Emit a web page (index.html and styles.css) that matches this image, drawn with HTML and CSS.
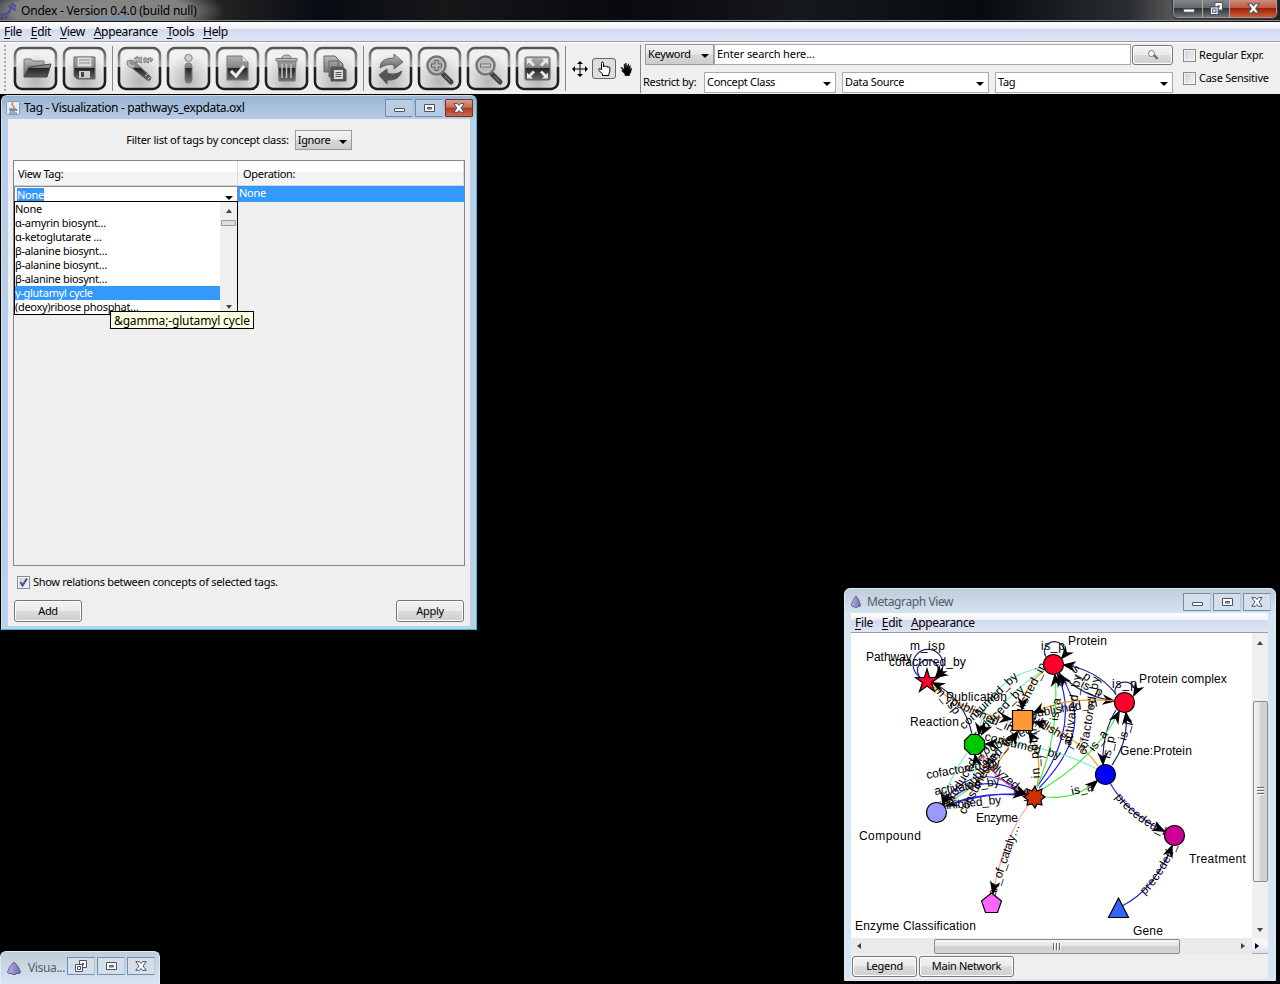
FILE: index.html
```html
<!DOCTYPE html>
<html lang="en">
<head>
<meta charset="utf-8">
<title>Ondex</title>
<link rel="stylesheet" href="styles.css">
</head>
<body>
<svg class="defs" width="0" height="0" aria-hidden="true">
  <defs>
    <linearGradient id="frame" x1="0" y1="0" x2="0" y2="1"><stop offset="0" stop-color="#555"/><stop offset=".45" stop-color="#aaa"/><stop offset=".46" stop-color="#222"/><stop offset="1" stop-color="#1d1d1d"/></linearGradient>
    <radialGradient id="shade" cx=".5" cy=".8" r=".65"><stop offset="0" stop-color="#b5b5b5"/><stop offset="1" stop-color="#f1f1f1"/></radialGradient>
    <linearGradient id="ink" gradientUnits="userSpaceOnUse" x1="0" y1="8" x2="0" y2="36"><stop offset="0" stop-color="#bbb"/><stop offset=".48" stop-color="#858585"/><stop offset=".5" stop-color="#222"/><stop offset="1" stop-color="#777"/></linearGradient>
    <linearGradient id="stone" x1="0" y1="0" x2="0" y2="1"><stop offset="0" stop-color="#bbb"/><stop offset="1" stop-color="#606060"/></linearGradient>
    <linearGradient id="purple" x1="0" y1="0" x2="1" y2="0"><stop offset="0" stop-color="#b9b5e6"/><stop offset="1" stop-color="#6f69ad"/></linearGradient>
    <symbol id="plate" viewBox="0 0 45 45"><rect x="2" y="2" width="41" height="41" rx="7" fill="url(#shade)" stroke="url(#frame)" stroke-width="2.6"/></symbol>
    <symbol id="min" viewBox="0 0 12 10"><rect x="1.5" y="5.5" width="10" height="3" rx=".5" fill="#fff" stroke="#4b5266"/></symbol>
    <symbol id="max" viewBox="0 0 12 10"><path d="M1.5 1.5h10v7h-10zM4.5 4.5h4v1.500h-4z" fill="#fff" fill-rule="evenodd" stroke="#4b5266"/></symbol>
    <symbol id="close" viewBox="0 0 12 10"><path d="M.8.6h3.600L6 2.500 7.600.6h3.600L8 5l3.200 4.300H7.600L6 7.400 4.400 9.300H.8L4 5z" fill="#fff" stroke="#4b5266"/></symbol>
    <symbol id="restore" viewBox="0 0 12 12"><path d="M4.500.5h7v7h-7z" fill="#fff" stroke="#4b5266"/><path d="M7 3h2v2H7z" fill="#4b5266"/><path d="M.5 4.500h7v7h-7z" fill="#fff" stroke="#4b5266"/><path d="M2.500 6.500h3v3h-3z" fill="none" stroke="#4b5266"/></symbol>
    <symbol id="ondex" viewBox="0 0 14 14"><path d="M7 1 11 5.500 13.500 11 12.500 12.500H9L8.500 13.500H5.500L5 12.500H1.500L.5 11 3 5.500z" fill="url(#purple)" stroke="#4a4780" stroke-width=".8"/></symbol>
    <marker id="arrow" viewBox="0 0 13 10" refX="11" refY="5" markerWidth="14" markerHeight="12" markerUnits="userSpaceOnUse" orient="auto"><path d="M0 0 13 5 0 10 4 5z"/></marker>
    <path id="gptText" d="M1110 783Q1128 814 1164 831L1196 846"/>
    <path id="gtText" d="M1122 906Q1154 890 1172 846L1184 815"/>
  </defs>
</svg>

<div class="app">
  <header class="app-title">
    <svg class="app-icon" width="16" height="16" viewBox="0 0 16 16" fill="#4644a0"><circle cx="2" cy="12" r="1.300"/><circle cx="2" cy="15" r="1.200"/><circle cx="5" cy="11.500" r="1.300"/><circle cx="6" cy="14" r="1.500"/><circle cx="7.500" cy="10.500" r="1.200"/><circle cx="9" cy="8.500" r="1.200"/><circle cx="10.500" cy="6.500" r="1.200"/><circle cx="10" cy="3.500" r="1.300"/><circle cx="12.500" cy="5" r="1.300"/><circle cx="12.500" cy="1.500" r="1.200"/><circle cx="15" cy="3" r="1.200"/><circle cx="14.500" cy="6.500" r="1.200"/></svg>
    <span class="app-name">Ondex - Version 0.4.0 (build null)</span>
    <div class="app-controls">
      <span class="ctl ctl-min"><svg width="13" height="11"><use href="#min"/></svg></span>
      <span class="ctl ctl-res"><svg width="13" height="13"><use href="#restore"/></svg></span>
      <span class="ctl ctl-close"><svg width="13" height="11"><use href="#close"/></svg></span>
    </div>
  </header>
  <nav class="menubar main-menu"><span><u>F</u>ile</span><span><u>E</u>dit</span><span><u>V</u>iew</span><span><u>A</u>ppearance</span><span><u>T</u>ools</span><span><u>H</u>elp</span></nav>

  <div class="toolbar">
    <i class="grip"></i>
    <div class="tools">
      <svg width="45" height="45"><use href="#plate"/><path d="M11 31V14q0-1 1-1h6l2 2h11v4" fill="url(#stone)" stroke="#777"/><path d="M11 31 16 21 38 18 34 31z" fill="url(#ink)" stroke="#444"/></svg>
      <svg width="45" height="45"><use href="#plate"/><path d="M12 11h21v22H15l-3-3z" fill="url(#ink)" stroke="#666"/><path d="M15 11h15v10H15z" fill="#ddd" stroke="#888"/><path d="M17 14h11M17 17h11" stroke="#888"/><path d="M17 25h11v7H17z" fill="#ccc"/><path d="M19 26h3v5h-3z" fill="#444"/></svg>
      <i class="rule"></i>
      <svg width="45" height="45"><use href="#plate"/><path d="M10 18 31 35q3 0 3-4L17 15q-3-2-7 3z" fill="url(#ink)" stroke="#777"/><path d="m10 15 4-1-1 3 3 2 2-2q1 5-3 5-5 0-5-7z" fill="#bbb" stroke="#777" stroke-width=".8"/><path d="M28 30l3-2M31 33l2-2" stroke="#ccc"/><path d="m20 10 2 2 3-1-1 3 1 3-3-1-3 1v-3l-2-2 3-.5zM28 11l1 2 3-1-1 3 1 2-3-1-2 1v-2l-1-2h2zM33 11l1 2h2l-1 2-2 1z" fill="#aaa" stroke="#777" stroke-width=".8"/></svg>
      <svg width="45" height="45"><use href="#plate"/><circle cx="22.500" cy="12" r="3.700" fill="#ccc" stroke="#888"/><rect x="19" y="17" width="7" height="20" rx="3.500" fill="url(#ink)" stroke="#777"/></svg>
      <svg width="45" height="45"><use href="#plate"/><path d="M12 10h15l6 6v18H12z" fill="url(#ink)" stroke="#777"/><path d="M27 10v6h6" fill="#ddd" stroke="#888"/><path d="m16 25 5 5 8-10" fill="none" stroke="#eee" stroke-width="3"/></svg>
      <svg width="45" height="45"><use href="#plate"/><path d="M14 15h18l-1 20H15z" fill="url(#ink)" stroke="#777"/><path d="M18 18v14M22.500 18v14M27 18v14" stroke="#c4c4c4" stroke-width="1.500"/><path d="M12 12.500h21v2.500H12zM18 12q0-3 4.500-3t4.500 3" fill="#bbb" stroke="#777"/></svg>
      <svg width="45" height="45"><use href="#plate"/><path d="M11 10h11l3 3v13H11zM16 15h11l3 3v13H16z" fill="url(#stone)" stroke="#666"/><path d="M18 21h12l3 3v11H18z" fill="#555" stroke="#555"/><path d="M21 24h9v9h-9z" fill="#ddd"/><path d="M22.500 26.500h6M22.500 28.500h6M22.500 30.500h6" stroke="#555"/></svg>
      <i class="rule"></i>
      <svg width="45" height="45"><use href="#plate"/><path d="M12 22Q12 12 26 12V8l9 8-9 7v-4Q19 17 12 22z" fill="url(#stone)" stroke="#666"/><path d="M34 25Q31 35 19 34v4l-8-9 8-6v4Q27 30 34 25z" fill="#555" stroke="#555"/></svg>
      <svg width="45" height="45"><use href="#plate"/><path d="m25 27 9 9" stroke="#444" stroke-width="5" stroke-linecap="round"/><path d="m28 30 5 5" stroke="#888"/><circle cx="19.500" cy="19.500" r="9" fill="#aaa" stroke="#777" stroke-width="2.500"/><circle cx="19.500" cy="19.500" r="7" fill="none" stroke="#ccc"/><path d="M19.500 14v11M14 19.500h11" stroke="#666" stroke-width="4"/><path d="M19.500 15v9M15 19.500h9" stroke="#bbb" stroke-width="2"/></svg>
      <svg width="45" height="45"><use href="#plate"/><path d="m25 27 9 9" stroke="#444" stroke-width="5" stroke-linecap="round"/><path d="m28 30 5 5" stroke="#888"/><circle cx="19.500" cy="19.500" r="9" fill="#bbb" stroke="#777" stroke-width="2.500"/><circle cx="19.500" cy="19.500" r="7" fill="none" stroke="#ccc"/><path d="M14 19.500h11" stroke="#777" stroke-width="4"/><path d="M15 19.500h9" stroke="#ccc" stroke-width="2"/></svg>
      <svg width="45" height="45"><use href="#plate"/><rect x="10" y="11" width="25" height="23" rx="1.500" fill="url(#ink)" stroke="#666"/><path d="M12 12.500h6l-2 2 4 4-2 2-4-4-2 2zM33 12.500h-6l2 2-4 4 2 2 4-4 2 2zM12 32.500h6l-2-2 4-4-2-2-4 4-2-2zM33 32.500h-6l2-2-4-4 2-2 4 4 2-2z" fill="#e8e8e8"/></svg>
      <i class="rule"></i>
    </div>
    <div class="modes">
      <svg width="16" height="16" viewBox="0 0 16 16"><path d="M8 1v14M1 8h14" stroke="#000"/><path d="m8 0 3 3H5zM8 16l3-3H5zM0 8l3-3v6zM16 8l-3-3v6z"/></svg>
      <span class="mode-on"><svg width="14" height="16" viewBox="0 0 14 16"><path d="M4.500 8.500V2.500q0-1.500 1-1.500t1 1.500V6q0-1 1-1t1.200 1q.3-.7 1-.7 1 0 1.100 1.200.4-.7 1-.7 1 0 1 1.500v3.500l-1 2v1.700H5.500v-1.700L2 9.500q-.8-1.500.3-2 1-.2 2.200 1.500z" fill="#fff" stroke="#000"/></svg></span>
      <svg width="12" height="14" viewBox="0 0 14 16"><path d="M4 10 1 6l2 1 2 2V2l1 5 1-6 1 6 2-5v5l2-3-.5 5 2-2-1 5-1.500 2v2H6v-2L2 10z" stroke="#000" stroke-width=".8"/></svg>
    </div>
    <div class="search">
      <div class="search-row">
        <span class="combo flat keyword">Keyword<i class="tri"></i></span><span class="field query">Enter search here...</span><span class="button go"><svg width="12" height="12" viewBox="0 0 12 12"><circle cx="4.500" cy="4.500" r="3" fill="#fff" stroke="#777"/><path d="m7 6 3.500 4" stroke="#666" stroke-width="2"/></svg></span>
        <span class="option"><i class="box"></i><b>Regular Expr.</b></span>
      </div>
      <div class="search-row second">
        <span class="restrict">Restrict by:</span><span class="combo cls">Concept Class<i class="tri"></i></span><span class="combo src">Data Source<i class="tri"></i></span><span class="combo tagc">Tag<i class="tri"></i></span>
        <span class="option"><i class="box"></i><b class="cs">Case Sensitive</b></span>
      </div>
    </div>
  </div>

  <main class="desktop">
    <section class="win tag-win">
      <div class="win-title">
        <svg width="14" height="14" viewBox="0 0 14 14"><rect x=".5" y=".5" width="13" height="13" rx="1" fill="#e6edf2" stroke="#8b9aa6"/><path d="M7 1.500q-2 2 0 3t0 3" fill="none" stroke="#e07a1f" stroke-width="1.300"/><path d="M3 8h7v1H4v1h5M3 12h8M10 8.500q2 0 0 1.500" fill="none" stroke="#4f6f8e"/></svg>
        <span class="tag-title">Tag - Visualization - pathways_expdata.oxl</span>
        <div class="win-controls"><i><svg width="12" height="10"><use href="#min"/></svg></i><i><svg width="12" height="10"><use href="#max"/></svg></i><i class="red"><svg width="12" height="10"><use href="#close"/></svg></i></div>
      </div>
      <div class="tag-body">
        <div class="filter"><span class="filter-text">Filter list of tags by concept class:</span><span class="combo flat ignore">Ignore<i class="tri"></i></span></div>
        <div class="table">
          <div class="thead"><span>View Tag:</span><span>Operation:</span></div>
          <div class="trow"><span class="edit"><em>None</em><i class="tri"></i></span><span class="picked">None</span></div>
          <div class="popup">
            <ul><li>None</li><li>α-amyrin biosynt…</li><li>α-ketoglutarate …</li><li>β-alanine biosynt…</li><li>β-alanine biosynt…</li><li>β-alanine biosynt…</li><li class="hot">γ-glutamyl cycle</li><li>(deoxy)ribose phosphat…</li></ul>
            <div class="popup-bar"><i class="up"></i><i class="mini"></i><i class="down"></i></div>
          </div>
          <div class="tooltip">&amp;gamma;-glutamyl cycle</div>
        </div>
        <div class="show"><i class="box"><svg width="11" height="11" viewBox="0 0 11 11"><path d="m2.500 5 2 3.500L9 1.500" fill="none" stroke="#3f568f" stroke-width="2"/></svg></i><span>Show relations between concepts of selected tags.</span></div>
        <div class="actions"><span class="button">Add</span><span class="button">Apply</span></div>
      </div>
    </section>

    <section class="win meta-win">
      <div class="win-title">
        <svg width="10" height="13" viewBox="0 0 14 14" preserveAspectRatio="none"><use href="#ondex" width="14" height="14"/></svg>
        <span class="meta-title">Metagraph View</span>
        <div class="win-controls"><i><svg width="12" height="10"><use href="#min"/></svg></i><i><svg width="12" height="10"><use href="#max"/></svg></i><i><svg width="12" height="10"><use href="#close"/></svg></i></div>
      </div>
      <div class="meta-body">
        <nav class="menubar"><span><u>F</u>ile</span><span><u>E</u>dit</span><span><u>A</u>ppearance</span></nav>
        <div class="view">
          <svg class="graph" width="401" height="305" viewBox="851 633 401 305">
            <g fill="none" stroke-width="1.200" marker-end="url(#arrow)">
              <g stroke="#23237a">
                <path d="M920 677A15 15 0 1 1 936 677"/>
                <path d="M1046 657A10 10 0 1 1 1062 658"/><path d="M1116 695A10 9 0 1 1 1134 695"/>
                <path d="M972 734Q964 698 933 683"/>
                <path d="M1059 673Q1083 697 1114 701"/><path d="M1116 694Q1096 669 1064 665"/>
                <path d="M1116 710Q1102 733 1103 764"/><path d="M1112 765Q1129 741 1126 713"/>
              </g>
              <g stroke="#2222e8">
                <path d="M922 679A10.500 10.500 0 1 1 936 677"/>
                <path d="M1025 794Q978 755 943 803"/><path d="M1025 795Q982 768 944 805"/><path d="M1025 796Q982 790 946 806"/>
                <path d="M946 806Q985 792 1024 794"/>
                <path d="M1037 787Q1080 727 1058 675"/><path d="M1039 788Q1098 728 1060 675"/>
                <path d="M1110 783Q1128 814 1164 831"/><path d="M1122 906Q1154 890 1172 846"/>
              </g>
              <g stroke="#ff9518">
                <path d="M934 687Q968 714 1011 719"/><path d="M1044 671Q1024 685 1022 709"/><path d="M1115 701Q1066 696 1034 713"/><path d="M1098 766Q1076 734 1035 722"/><path d="M1037 787Q1043 755 1029 732"/><path d="M985 744Q1008 744 1018 732"/><path d="M945 803Q995 779 1016 733"/>
              </g>
              <g stroke="#7bf0ca">
                <path d="M1044 667Q985 678 979 734"/><path d="M1044 670Q1006 693 982 734"/><path d="M1097 769Q1045 742 986 744"/><path d="M967 753Q948 780 943 803"/><path d="M945 805Q981 787 975 755"/>
              </g>
              <g stroke="#46ee46"><path d="M1037 787Q1060 733 1055 675"/><path d="M1041 790Q1096 757 1119 712"/><path d="M1045 797Q1075 800 1097 781"/></g>
              <path stroke="#f23bb5" d="M980 753Q996 782 1026 794"/><path stroke="#ffa8a8" d="M1029 804Q1003 839 993 893"/>
            </g>
            <g class="edge-text">
              <text x="910" y="650" textLength="35">m_isp</text><text x="889" y="666" textLength="77">cofactored_by</text><text x="1041" y="650" textLength="24">is_p</text><text x="1112" y="688" textLength="25">is_p</text>
              <text transform="translate(934 690) rotate(50)">m_isp</text>
              <text transform="translate(950 704) rotate(25)" textLength="68">published_in</text>
              <text transform="translate(964 730) rotate(-44)" textLength="76">consumed_by</text>
              <text transform="translate(973 744) rotate(-46)" textLength="75">produced_by</text>
              <text transform="translate(1014 729) rotate(-63)" textLength="72">published_in</text>
              <text transform="translate(1031 718) rotate(-10)" textLength="68">published_in</text>
              <text transform="translate(1026 718) rotate(31)" textLength="67">published_in</text>
              <text transform="translate(1040 778) rotate(-94)" textLength="65">in_publish</text>
              <text transform="translate(984 740) rotate(14)" textLength="78">consumed_by</text>
              <text transform="translate(927 779) rotate(-10)" textLength="75">cofactored_by</text>
              <text transform="translate(935 795) rotate(-9)" textLength="66">activated_by</text>
              <text transform="translate(940 810) rotate(-6)" textLength="62">inhibited_by</text>
              <text transform="translate(965 815) rotate(-61)" textLength="72">consumed_by</text>
              <text transform="translate(951 806) rotate(-60)" textLength="72">produced_by</text>
              <text transform="translate(970 790) rotate(-49)" textLength="66">published_in</text>
              <text transform="translate(977 758) rotate(40)" textLength="69">catalyzed_by</text>
              <text transform="translate(985 755) rotate(-26)">published_in</text>
              <text transform="translate(1058 721) rotate(-83)">is_a</text>
              <text transform="translate(1071 746) rotate(-82)" textLength="72">activated_by</text>
              <text transform="translate(1086 755) rotate(-80)" textLength="79">cofactored_by</text>
              <text transform="translate(1094 752) rotate(-51)">is_a</text>
              <text transform="translate(1072 795) rotate(-12)">is_a</text>
              <text transform="translate(1069 669) rotate(34)">is_p</text><text transform="translate(1080 687) rotate(25)">is_p</text>
              <text transform="translate(1110 759) rotate(-78)">is_p</text><text transform="translate(1126 741) rotate(-75)">is_p</text>
              <text dy="4"><textPath href="#gptText" startOffset="14">preceded_by</textPath></text>
              <text dy="4"><textPath href="#gtText" startOffset="24">preceded_by</textPath></text>
              <text transform="translate(993 903) rotate(-71)" textLength="82">part_of_cataly…</text>
            </g>
            <g stroke="#000" stroke-width="1.200">
              <path d="m927 669 2.500 8.500h9l-7 5 3 9-7.500-5.500-7.500 5.500 3-9-7-5h9z" fill="#ff002c"/>
              <circle cx="1053.500" cy="664.500" r="10" fill="#ff002c"/><circle cx="1124.500" cy="702.500" r="10" fill="#ff002c"/>
              <path d="M1012.500 710.500h20v20h-20z" fill="#ff9935"/>
              <path d="m970.500 734.500h8l6 6v8l-6 6h-8l-6-6v-8z" fill="#00c800"/>
              <circle cx="936.500" cy="812.500" r="10" fill="#9999ff"/><circle cx="1105.500" cy="774.500" r="10" fill="#0000ff"/><circle cx="1174.500" cy="835.500" r="10" fill="#cc0099"/>
              <path d="m1035 786 2 5 5-2-1 5 4 3-4 3 1 5-5-1-2 4-3-4-5 1 1-5-4-3 4-3-1-5 5 2z" fill="#cc3300"/>
              <path d="m991.500 893 10 8-4 11.500h-12l-4-11.500z" fill="#ff66ff"/><path d="m1118.500 898 10 19.500h-20z" fill="#3366ff"/>
            </g>
            <g class="node-text">
              <text x="866" y="661" textLength="46">Pathway</text><text x="946" y="701" textLength="61">Publication</text><text x="910" y="726" textLength="49">Reaction</text><text x="1068" y="645" textLength="39">Protein</text><text x="1139" y="683" textLength="88">Protein complex</text><text x="1120" y="755" textLength="72">Gene:Protein</text><text x="976" y="822" textLength="42">Enzyme</text><text x="859" y="840" textLength="62">Compound</text><text x="1189" y="863" textLength="57">Treatment</text><text x="855" y="930" textLength="121">Enzyme Classification</text><text x="1133" y="935" textLength="30">Gene</text>
            </g>
          </svg>
          <div class="vbar"><i class="up"></i><div class="vthumb"><b></b></div><i class="down"></i></div>
          <div class="hbar"><i class="left"></i><div class="hthumb"><b></b></div><i class="right"></i></div>
          <div class="corner"><i class="right"></i></div>
        </div>
        <div class="meta-actions"><span class="button">Legend</span><span class="button">Main Network</span></div>
      </div>
    </section>

    <section class="win mini-win">
      <div class="win-title"><svg width="14" height="14"><use href="#ondex"/></svg><span>Visua...</span>
        <div class="win-controls"><i><svg width="12" height="12"><use href="#restore"/></svg></i><i><svg width="12" height="10"><use href="#max"/></svg></i><i><svg width="12" height="10"><use href="#close"/></svg></i></div>
      </div>
    </section>
  </main>
</div>
</body>
</html>
```
FILE: styles.css
```css
* { box-sizing: border-box; }
body { margin: 0; background: #000; overflow: hidden; font: 11px/14px "Noto Sans", "Open Sans", sans-serif; letter-spacing: -0.3px; color: #000; white-space: nowrap; }
svg { display: block; flex: none; }
i, em, b { font-style: normal; font-weight: normal; }
.defs { position: absolute; }
.app { width: 1280px; height: 984px; display: flex; flex-direction: column; }

.app-title { height: 22px; display: flex; align-items: center; background: radial-gradient(ellipse 40px 8px at 113px 20px, #7893b0, transparent), radial-gradient(ellipse 125px 30px at 100px 11px, #8a8a8a 0, #808080 70%, transparent), linear-gradient(90deg, #1a1f24 0, #222 220px, #080c12 320px, #151719 440px, #07090c 620px, #16191c 800px, #070b10 980px, #2a2e33 1130px, #555 1170px, #222 1280px); border-bottom: 1px solid #111; box-shadow: inset 0 -1px #888; }
.app-icon { margin-top: 1px; }
.app-name { margin-left: 5px; font-size: 12px; letter-spacing: -0.2px; }
.app-controls { margin-left: auto; margin-right: 3px; align-self: flex-start; display: flex; height: 18px; border: 1px solid #999; border-top: 0; border-radius: 0 0 5px 5px; overflow: hidden; box-shadow: 0 0 0 1px #333; }
.ctl { display: flex; align-items: center; justify-content: center; background: linear-gradient(#85888b 0, #66696c 45%, #303235 50%, #707477); border-right: 1px solid #aaa; }
.ctl-min { width: 29px; } .ctl-res { width: 27px; }
.ctl-close { width: 46px; border: 0; background: linear-gradient(#d08b7c 0, #bd5a43 45%, #9b2109 50%, #d25c31); }

.menubar { height: 20px; display: flex; gap: 9px; padding: 0 0 0 4px; font-size: 12px; line-height: 20px; letter-spacing: -0.35px; background: linear-gradient(#fff 0, #eef0f9 35%, #d4daee 40%, #dfe5f5 100%); border-bottom: 1px solid #9a9da8; }
.menubar u { text-underline-offset: 2px; }

.toolbar { height: 52px; display: flex; background: #efefef; border-top: 1px solid #fff; }
.grip { width: 2px; height: 46px; margin: 2px 8px 0 4px; background: repeating-linear-gradient(#aaa 0 2px, transparent 2px 4px); }
.tools { display: flex; gap: 4px; align-items: center; padding-bottom: 1px; width: 555px; margin-left: -1px; }
.rule { width: 2px; height: 45px; border-right: 1px solid #888; }
.modes { display: flex; align-items: center; width: 73px; padding: 0 0 1px 4px; gap: 4px; border-right: 1px solid #888; height: 48px; margin-top: 2px; }
.mode-on { width: 24px; height: 21px; display: flex; align-items: center; justify-content: center; border: 1px solid #666; border-radius: 3px; background: #dedede; }
.search { flex: 1; padding: 0 0 0 4px; }
.search-row { height: 22px; display: flex; align-items: center; }
.search-row.second { margin-top: 6px; }
.combo { display: flex; align-items: center; justify-content: space-between; background: #fff; border: 1px solid #aaaab3; padding: 0 4px 0 2px; height: 21px; }
.combo.flat { background: linear-gradient(#f3f3f3 0, #e9e9e9 48%, #d7d7d7 52%, #cdcdcd); border-color: #999; }
.tri { border: 4.500px solid transparent; border-bottom: 0; border-top: 4px solid #000; margin-top: 3px; }
.keyword { width: 69px; }
.field { background: #fff; border: 1px solid #aaaab3; height: 21px; }
.query { width: 417px; padding: 2px 2px; letter-spacing: -0.1px; }
.button { display: flex; align-items: center; justify-content: center; border: 1px solid #777; border-radius: 3px; box-shadow: inset 0 0 0 1px #fff; background: linear-gradient(#f2f2f2 0, #ebebeb 48%, #dcdcdc 50%, #cfcfcf); height: 22px; }
.go { width: 41px; height: 20px; margin: 1px 0 0 1px; }
.option { display: flex; align-items: center; gap: 3px; margin: 2px 0 0 10px; letter-spacing: -0.2px; }
.cs { letter-spacing: -0.25px; }
.box { display: block; width: 13px; height: 13px; border: 1px solid #8a8b8c; background: linear-gradient(135deg, #c9ced6, #f6f6f6); box-shadow: inset 0 0 0 1px #f4f4f4; flex: none; }
.restrict { width: 61px; margin-left: -2px; }
.cls { width: 132px; } .src { width: 147px; margin-left: 6px; } .tagc { width: 178px; margin-left: 6px; }
.second .option { margin-top: -8px; }

.desktop { position: relative; flex: 1; }
.win { position: absolute; border-radius: 6px 6px 0 0; display: flex; flex-direction: column; }
.win-title { display: flex; align-items: center; font-size: 12px; letter-spacing: -0.35px; }
.win-controls { margin-left: auto; display: flex; gap: 2px; }
.win-controls i { width: 28px; height: 18px; border: 1px solid #758ba8; border-right-color: #b7c7da; display: flex; align-items: center; justify-content: center; background: linear-gradient(#ffffff50, #ffffff10); border-radius: 1px; }
.win-controls .red { background: linear-gradient(#da9a8b 0, #c7705c 45%, #b23a22 50%, #cf6a4c); border-color: #743127; }

.tag-win { left: 1px; top: 1px; width: 476px; height: 535px; background: linear-gradient(#99b4d1 0, #bad0e9 26px, #b9d1ea); border: 1px solid #ccdcec; border-right: 1px solid #38bdd9; border-bottom: 1px solid #38bdd9; padding: 0 6px 3px 6px; }
.tag-win .win-title { height: 24px; margin: 0 -3px 0 -2px; gap: 4px; padding-top: 1px; }
.tag-body { flex: 1; background: #efefef; padding: 11px 5px 4px; display: flex; flex-direction: column; }
.filter { display: flex; align-items: center; justify-content: center; height: 20px; gap: 6px; }
.filter-text { letter-spacing: -0.25px; }
.ignore { width: 57px; height: 20px; }
.table { position: relative; height: 406px; margin-top: 10px; border: 1px solid #828790; }
.thead { height: 25px; display: grid; grid-template-columns: 224px 1fr; background: linear-gradient(#fff 0, #fff 45%, #f1f2f4 50%, #f4f5f7); border-bottom: 1px solid #d5d5d5; line-height: 25px; }
.thead span { padding-left: 4px; border-right: 1px solid #ddd; }
.thead span + span { padding-left: 5px; }
.trow { display: grid; grid-template-columns: 224px 1fr; height: 16px; }
.edit { display: flex; justify-content: space-between; align-items: center; background: #fff; border: 1px solid #888; padding: 0 4px 0 2px; }
.edit .tri { margin-top: 8px; }
.edit em { background: #3399ff; color: #fff; line-height: 13px; }
.picked { background: #3399ff; color: #fff; padding-left: 1px; }
.popup { position: absolute; left: 0; top: 40px; width: 224px; height: 114px; background: #fff; border: 1px solid #000; display: flex; }
.popup ul { list-style: none; margin: 0; padding: 0; width: 205px; }
.popup li { height: 14px; line-height: 14px; }
.popup .hot { background: #3399ff; color: #fff; }
.popup-bar { flex: 1; background: #efefef; display: flex; flex-direction: column; align-items: center; padding: 7px 0 5px; }
.mini { width: 15px; height: 6px; border: 1px solid #999; border-radius: 1px; background: #ddd; margin-top: 7px; }
.popup-bar .down { margin-top: auto; }
.up { border: 3.500px solid transparent; border-top: 0; border-bottom: 4px solid #444; }
.down { border: 3.500px solid transparent; border-bottom: 0; border-top: 4px solid #444; }
.left { border: 3.500px solid transparent; border-left: 0; border-right: 4px solid #444; }
.right { border: 3.500px solid transparent; border-right: 0; border-left: 4px solid #444; }
.tooltip { position: absolute; left: 96px; top: 150px; width: 144px; height: 18px; border: 1px solid #000; background: #ffffe1; font-size: 12px; line-height: 17px; padding-left: 3px; letter-spacing: -0.15px; }
.show { display: flex; align-items: center; gap: 3px; padding-left: 4px; margin-top: 9px; letter-spacing: -0.3px; }
.actions { display: flex; justify-content: space-between; margin-top: 11px; padding: 0 1px; }
.actions .button { width: 68px; }

.meta-win { left: 844px; top: 494px; width: 432px; height: 393px; background: linear-gradient(#bfcddb, #d7e4f2 26px); border: 1px solid #e2ebf4; padding: 0 7px 1px 6px; }
.meta-win .win-title { height: 24px; margin: 0 -3px 0 0; gap: 6px; padding-top: 1px; color: #555b66; letter-spacing: -0.4px; }
.meta-body { flex: 1; background: #efefef; display: flex; flex-direction: column; }
.view { display: grid; grid-template-columns: 401px 1fr; grid-template-rows: 305px 16px; }
.graph { background: #fff; font-family: "Liberation Sans", Arial, sans-serif; font-size: 12px; letter-spacing: 0.2px; }
.vbar { background: #efefef; display: flex; flex-direction: column; align-items: center; justify-content: space-between; padding: 8px 0 6px; }
.vthumb { width: 15px; height: 181px; margin-top: 9px; border: 1px solid #8b8b8b; border-radius: 2px; background: linear-gradient(90deg, #f4f4f4, #e2e2e2 48%, #cdcdcd 52%, #d6d6d6); display: flex; align-items: center; justify-content: center; }
.vthumb b { width: 7px; height: 8px; background: repeating-linear-gradient(#666 0 1px, #fff 1px 2px, transparent 2px 3px); }
.hbar { background: #eaeaea; display: flex; align-items: center; justify-content: space-between; padding: 0 7px 0 6px; }
.hthumb { width: 246px; height: 15px; margin-left: 12px; border: 1px solid #8b8b8b; border-radius: 2px; background: linear-gradient(#f4f4f4, #e2e2e2 48%, #cdcdcd 52%, #d6d6d6); display: flex; align-items: center; justify-content: center; }
.hthumb b { width: 8px; height: 7px; background: repeating-linear-gradient(90deg, #666 0 1px, #fff 1px 2px, transparent 2px 3px); }
.corner { background: linear-gradient(#f5f6fb 45%, #d9dff1); border-bottom: 1px solid #aaa; display: flex; align-items: center; padding-left: 3px; }
.corner .right { border-left-color: #000; }
.meta-actions { display: flex; gap: 2px; padding: 2px 1px; }
.meta-actions .button { height: 21px; width: 65px; padding-bottom: 1px; }
.meta-actions .button + .button { width: 95px; }

.mini-win { left: 0; top: 857px; width: 160px; height: 33px; background: linear-gradient(#bfcddb, #d7e4f2); border: 1px solid #e2ebf4; border-bottom: 0; }
.mini-win .win-title { height: 28px; padding: 0 4px 0 6px; color: #555b66; gap: 7px; }
.mini-win .win-title span { width: 32px; padding-top: 3px; }
.mini-win .win-title > svg { margin-top: 3px; }
```
